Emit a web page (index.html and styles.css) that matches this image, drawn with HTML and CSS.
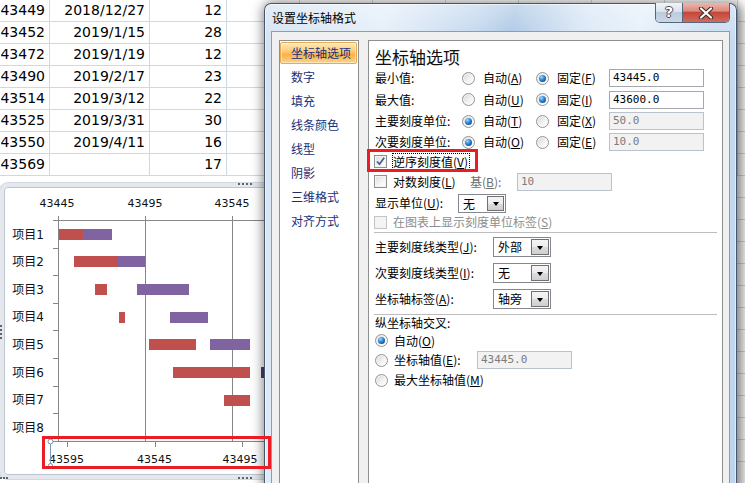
FILE: index.html
```html
<!DOCTYPE html>
<html lang="zh-CN">
<head>
<meta charset="utf-8">
<title>设置坐标轴格式</title>
<link rel="stylesheet" href="styles.css">
</head>
<body>
<div class="sheet">
  <div class="srow"><div class="cell ca">43449</div><div class="cell cb">2018/12/27</div><div class="cell cc">12</div><div class="cell cd"></div><div class="cell cd"></div><div class="cell cd"></div><div class="cell cd"></div><div class="cell cd"></div><div class="cell cd"></div><div class="cell cd"></div></div>
  <div class="srow"><div class="cell ca">43452</div><div class="cell cb">2019/1/15</div><div class="cell cc">28</div><div class="cell cd"></div><div class="cell cd"></div><div class="cell cd"></div><div class="cell cd"></div><div class="cell cd"></div><div class="cell cd"></div><div class="cell cd"></div></div>
  <div class="srow"><div class="cell ca">43472</div><div class="cell cb">2019/1/19</div><div class="cell cc">12</div><div class="cell cd"></div><div class="cell cd"></div><div class="cell cd"></div><div class="cell cd"></div><div class="cell cd"></div><div class="cell cd"></div><div class="cell cd"></div></div>
  <div class="srow"><div class="cell ca">43490</div><div class="cell cb">2019/2/17</div><div class="cell cc">23</div><div class="cell cd"></div><div class="cell cd"></div><div class="cell cd"></div><div class="cell cd"></div><div class="cell cd"></div><div class="cell cd"></div><div class="cell cd"></div></div>
  <div class="srow"><div class="cell ca">43514</div><div class="cell cb">2019/3/12</div><div class="cell cc">22</div><div class="cell cd"></div><div class="cell cd"></div><div class="cell cd"></div><div class="cell cd"></div><div class="cell cd"></div><div class="cell cd"></div><div class="cell cd"></div></div>
  <div class="srow"><div class="cell ca">43525</div><div class="cell cb">2019/3/31</div><div class="cell cc">30</div><div class="cell cd"></div><div class="cell cd"></div><div class="cell cd"></div><div class="cell cd"></div><div class="cell cd"></div><div class="cell cd"></div><div class="cell cd"></div></div>
  <div class="srow"><div class="cell ca">43550</div><div class="cell cb">2019/4/11</div><div class="cell cc">16</div><div class="cell cd"></div><div class="cell cd"></div><div class="cell cd"></div><div class="cell cd"></div><div class="cell cd"></div><div class="cell cd"></div><div class="cell cd"></div></div>
  <div class="srow"><div class="cell ca">43569</div><div class="cell cb"></div><div class="cell cc">17</div><div class="cell cd"></div><div class="cell cd"></div><div class="cell cd"></div><div class="cell cd"></div><div class="cell cd"></div><div class="cell cd"></div><div class="cell cd"></div></div>
  <div class="srow"></div><div class="srow"></div><div class="srow"></div><div class="srow"></div><div class="srow"></div><div class="srow"></div><div class="srow"></div><div class="srow"></div><div class="srow"></div><div class="srow"></div><div class="srow"></div><div class="srow"></div><div class="srow"></div><div class="srow"></div>
</div>

<div class="chart">
  <span class="hdl hdl-top"></span>
  <span class="hdl hdl-left"></span>
  <span class="hdl hdl-bottom"></span>
  <span class="hdl hdl-corner"></span>
  <svg class="plot" width="292" height="296" viewBox="0 0 292 296">
    <g class="axlbl" text-anchor="middle">
      <text x="57" y="23.5">43445</text>
      <text x="145" y="23.5">43495</text>
      <text x="232" y="23.5">43545</text>
    </g>
    <g stroke="#868686" stroke-width="1" fill="none">
      <path d="M53 37.5H292"/>
      <path d="M58.5 33V259M145.5 33V259M232.5 33V259"/>
      <path d="M53 65.5H58M53 92.5H58M53 120.5H58M53 147.5H58M53 175.5H58M53 203.5H58M53 230.5H58"/>
      <path d="M50 258.5H292M67.5 258.5V264M155.5 258.5V264M242.5 258.5V264"/>
    </g>
    <g class="catlbl" text-anchor="end">
      <text x="44" y="55.5">项目1</text>
      <text x="44" y="83">项目2</text>
      <text x="44" y="110.5">项目3</text>
      <text x="44" y="138">项目4</text>
      <text x="44" y="165.5">项目5</text>
      <text x="44" y="193.5">项目6</text>
      <text x="44" y="221">项目7</text>
      <text x="44" y="248.5">项目8</text>
    </g>
    <g fill="#c0504d">
      <rect x="59" y="46" width="24" height="11"/>
      <rect x="74" y="73" width="44" height="11"/>
      <rect x="95" y="101" width="12" height="11"/>
      <rect x="119" y="129" width="6" height="11"/>
      <rect x="149" y="156" width="47" height="11"/>
      <rect x="173" y="184" width="77" height="11"/>
      <rect x="224" y="212" width="26" height="11"/>
    </g>
    <g fill="#8064a2">
      <rect x="83" y="46" width="29" height="11"/>
      <rect x="118" y="73" width="27.5" height="11"/>
      <rect x="137" y="101" width="52" height="11"/>
      <rect x="170" y="129" width="38" height="11"/>
      <rect x="210" y="156" width="40" height="11"/>
      <rect x="261" y="184" width="4" height="11" fill="#4f3f6b"/>
    </g>
    <g class="axlbl" text-anchor="middle">
      <text x="66.5" y="280">43595</text>
      <text x="154.5" y="280">43545</text>
      <text x="240" y="280">43495</text>
    </g>
    <path d="M50.5 258.5V282.5" stroke="#7d97b8" stroke-width="1"/>
    <circle cx="50.5" cy="258.5" r="2.5" fill="#fff" stroke="#6f8db3"/>
    <circle cx="50.5" cy="282.5" r="2" fill="#fff" stroke="#6f8db3"/>
  </svg>
</div>

<div class="dialog">
  <div class="titlebar">设置坐标轴格式</div>
  <div class="caption">
    <div class="cap-help">?</div>
    <div class="cap-close">
      <svg width="16" height="12" viewBox="0 0 16 12">
        <path d="M3 1.5L13 10.5M13 1.5L3 10.5" stroke="#3d2b2b" stroke-width="4.2" stroke-linecap="round"/>
        <path d="M3 1.5L13 10.5M13 1.5L3 10.5" stroke="#fff" stroke-width="2.2" stroke-linecap="round"/>
      </svg>
    </div>
  </div>
  <div class="client">
    <div class="nav">
      <div class="nav-item sel">坐标轴选项</div>
      <div class="nav-item">数字</div>
      <div class="nav-item">填充</div>
      <div class="nav-item">线条颜色</div>
      <div class="nav-item">线型</div>
      <div class="nav-item">阴影</div>
      <div class="nav-item">三维格式</div>
      <div class="nav-item">对齐方式</div>
    </div>
    <div class="panel">
      <div class="ph">坐标轴选项</div>

      <div class="row h22">
        <span class="lbl">最小值:</span>
        <span class="opt o1"><i class="radio"></i>自动(<u>A</u>)</span>
        <span class="opt o2"><i class="radio on"></i>固定(<u>F</u>)</span>
        <span class="tb">43445.0</span>
      </div>
      <div class="row h21">
        <span class="lbl">最大值:</span>
        <span class="opt o1"><i class="radio"></i>自动(<u>U</u>)</span>
        <span class="opt o2"><i class="radio on"></i>固定(<u>I</u>)</span>
        <span class="tb">43600.0</span>
      </div>
      <div class="row h22">
        <span class="lbl">主要刻度单位:</span>
        <span class="opt o1"><i class="radio on"></i>自动(<u>T</u>)</span>
        <span class="opt o2"><i class="radio"></i>固定(<u>X</u>)</span>
        <span class="tb dis">50.0</span>
      </div>
      <div class="row h20">
        <span class="lbl">次要刻度单位:</span>
        <span class="opt o1"><i class="radio on"></i>自动(<u>O</u>)</span>
        <span class="opt o2"><i class="radio"></i>固定(<u>E</u>)</span>
        <span class="tb dis">10.0</span>
      </div>

      <div class="row h18 cbrow">
        <i class="chk on"><svg width="11" height="11" viewBox="0 0 11 11"><path d="M2 5.5L4.5 8.2L9.2 1.8" fill="none" stroke="#4a5c93" stroke-width="1.8"/></svg></i>
        <span class="focus">逆序刻度值(<u>V</u>)</span>
      </div>
      <div class="row h23 cbrow">
        <i class="chk"></i>
        <span class="logtxt">对数刻度(<u>L</u>)</span>
        <span class="base">基(<u>B</u>):</span>
        <span class="tb dis">10</span>
      </div>
      <div class="row h20">
        <span class="lbl lbl-unit">显示单位(<u>U</u>):</span>
        <span class="dd dd-s"><span class="dd-t">无</span><span class="dd-b"></span></span>
      </div>
      <div class="row h18 cbrow">
        <i class="chk dis"></i>
        <span class="distxt">在图表上显示刻度单位标签(<u>S</u>)</span>
      </div>

      <div class="sep sep1"></div>

      <div class="row h26">
        <span class="lbl lbl-tick">主要刻度线类型(<u>J</u>):</span>
        <span class="dd"><span class="dd-t">外部</span><span class="dd-b"></span></span>
      </div>
      <div class="row h26">
        <span class="lbl lbl-tick">次要刻度线类型(<u>I</u>):</span>
        <span class="dd"><span class="dd-t">无</span><span class="dd-b"></span></span>
      </div>
      <div class="row h26">
        <span class="lbl lbl-tick">坐标轴标签(<u>A</u>):</span>
        <span class="dd"><span class="dd-t">轴旁</span><span class="dd-b"></span></span>
      </div>

      <div class="sep sep2"></div>

      <div class="row h16">纵坐标轴交叉:</div>
      <div class="row h19 rrow"><i class="radio on"></i>自动(<u>O</u>)</div>
      <div class="row h20 rrow"><i class="radio"></i><span class="cross-lbl">坐标轴值(<u>E</u>):</span><span class="tb dis">43445.0</span></div>
      <div class="row h20 rrow"><i class="radio"></i>最大坐标轴值(<u>M</u>)</div>
    </div>
  </div>
</div>

<div class="mark mark-axis"></div>
<div class="mark mark-rev"></div>
</body>
</html>
```

FILE: styles.css
```css
* { box-sizing: border-box; }
html, body { margin: 0; padding: 0; }
body {
  width: 745px;
  height: 483px;
  overflow: hidden;
  position: relative;
  background: #fff;
  font-family: "DejaVu Sans", sans-serif;
}

/* ---------- spreadsheet ---------- */
.sheet { display: flex; flex-direction: column; }
.srow {
  display: flex;
  flex: none;
  height: 22px;
  border-bottom: 1px solid #d0d7e5;
}
.cell {
  flex: none;
  height: 21px;
  line-height: 21px;
  border-right: 1px solid #d0d7e5;
  font-size: 14px;
  text-align: right;
  padding-right: 4px;
  color: #000;
  white-space: nowrap;
}
.ca { width: 50px; }
.cb { width: 100px; }
.cc { width: 77px; }
.cd { width: 73px; }

/* ---------- chart object ---------- */
.chart {
  position: absolute;
  left: 0;
  top: 183px;
  width: 292px;
  height: 296px;
  background: #fff;
  border: 4px solid #e4e8ed;
  border-radius: 8px;
  box-shadow: inset 0 0 0 1px #bcc6d1, 0 0 0 1px #d2d9e1;
}
.plot { display: block; margin: -4px; }
.axlbl { font-family: "DejaVu Sans", sans-serif; font-size: 11px; fill: #111; }
.catlbl { font-family: "DejaVu Sans", "Noto Sans CJK SC", sans-serif; font-size: 12px; fill: #111; }
.hdl { position: absolute; display: block; }
.hdl-top { left: 234px; top: -4px; width: 14px; border-top: 2px dotted #5c6470; }
.hdl-bottom { left: 234px; bottom: -4px; width: 14px; border-top: 2px dotted #5c6470; }
.hdl-left { left: -4px; top: 138px; height: 14px; border-left: 2px dotted #5c6470; }
.hdl-corner { left: -4px; bottom: -4px; width: 8px; border-top: 2px dotted #5c6470; }

/* ---------- dialog window ---------- */
.dialog {
  position: absolute;
  left: 264px;
  top: 3px;
  width: 473px;
  height: 500px;
  display: flex;
  flex-direction: column;
  padding: 0 6px;
  border: 1px solid #46566b;
  border-bottom: none;
  border-radius: 7px 7px 0 0;
  background:
    linear-gradient(180deg, rgba(255,255,255,0.35), rgba(255,255,255,0) 40px),
    linear-gradient(100deg, #d3e2f2 0%, #e4eef9 22%, #c2d7ee 38%, #aac6e4 45%, #d9e7f6 58%, #e6f0fa 68%, #c9dcf1 80%, #bcd4ee 100%);
  box-shadow: inset 0 0 0 1px rgba(255,255,255,0.55), 2px 2px 12px 3px rgba(0,0,0,0.5);
  font-family: "Noto Sans CJK SC", "DejaVu Sans", sans-serif;
  font-size: 12px;
  color: #000;
}
.titlebar {
  flex: none;
  height: 27px;
  line-height: 27px;
  padding-left: 1px;
  font-size: 12px;
  color: #000;
}
.caption {
  position: absolute;
  top: -1px;
  right: 6px;
  display: flex;
  height: 20px;
  border: 1px solid #56667c;
  border-top: none;
  border-radius: 0 0 5px 5px;
  overflow: hidden;
}
.cap-help {
  width: 27px;
  border-right: 1px solid #56667c;
  background: linear-gradient(180deg, #f0f4fa 0%, #d9e3ef 45%, #bccbde 50%, #c8d6e8 100%);
  text-align: center;
  font-family: "DejaVu Sans", sans-serif;
  font-weight: bold;
  font-size: 14px;
  line-height: 19px;
  color: #fff;
  text-shadow: 1px 0 0 #444c58, -1px 0 0 #444c58, 0 1px 0 #444c58, 0 -1px 0 #444c58;
}
.cap-close {
  width: 46px;
  display: flex;
  align-items: center;
  justify-content: center;
  background: linear-gradient(180deg, #ecb7ac 0%, #dc8b7c 42%, #c5473a 50%, #d06a5c 100%);
}

.client {
  flex: 1;
  display: flex;
  gap: 9px;
  padding: 8px 6px 0 7px;
  background: #f0f0f0;
  border: 1px solid #8d9cb0;
  border-bottom: none;
}
.nav {
  flex: none;
  width: 80px;
  display: flex;
  flex-direction: column;
  gap: 2px;
  padding: 1px 1px 0 0;
  background: #fff;
  border: 1px solid #8e8f8f;
}
.nav-item {
  height: 22px;
  line-height: 20px;
  padding-left: 10px;
  border: 1px solid transparent;
  color: #17307a;
  white-space: nowrap;
}
.nav-item.sel {
  border-color: #e5aa55;
  border-radius: 2px;
  background: linear-gradient(180deg, #fee9b8 0%, #fdcc78 40%, #fbb246 58%, #fdd28a 100%);
  box-shadow: inset 0 0 0 1px rgba(255,255,255,0.45);
}

.panel {
  flex: none;
  width: 355px;
  padding: 5px 5px 0 6px;
  background: #fff;
  border: 1px solid #8e8f8f;
  display: flex;
  flex-direction: column;
}
.ph {
  height: 21px;
  line-height: 21px;
  font-size: 17px;
  color: #111;
}
.row {
  display: flex;
  align-items: center;
  flex: none;
  white-space: nowrap;
  line-height: 14px;
}
.h16 { height: 16px; }
.h18 { height: 18px; }
.h19 { height: 19px; }
.h20 { height: 20px; }
.h21 { height: 21px; }
.h22 { height: 22px; }
.h23 { height: 23px; }
.h26 { height: 26px; }

.lbl { flex: none; width: 87px; }
.lbl-unit { width: 83px; }
.lbl-tick { width: 118px; }
.opt { flex: none; display: flex; align-items: center; }
.o1 { width: 74px; }
.o2 { width: 73px; }
.opt .radio { margin-right: 8px; }

.radio {
  flex: none;
  position: relative;
  display: inline-block;
  width: 13px;
  height: 13px;
  border-radius: 50%;
  border: 1px solid #939393;
  background: linear-gradient(135deg, #d6d6d6 0%, #f4f4f4 60%, #ffffff 100%);
  box-shadow: inset 0 0 0 1px rgba(255,255,255,0.6);
}
.radio.on::after {
  content: "";
  position: absolute;
  left: 2px;
  top: 2px;
  width: 7px;
  height: 7px;
  border-radius: 50%;
  background: radial-gradient(circle at 35% 30%, #a7dcff 0%, #3a95e0 35%, #0d56a3 75%, #093f7d 100%);
}

.chk {
  flex: none;
  display: inline-flex;
  align-items: center;
  justify-content: center;
  width: 13px;
  height: 13px;
  margin-left: -1px;
  margin-right: 6px;
  border: 1px solid #8e8f8f;
  background: linear-gradient(135deg, #dcdcdc 0%, #f6f6f6 60%, #fff 100%);
  box-shadow: inset 0 0 0 1px #f4f4f4;
}
.chk.dis { border-color: #c4c4c4; background: #f4f4f4; box-shadow: none; }

.focus {
  outline: 1px dotted #000;
  outline-offset: 0;
  padding: 0 1px 0 0;
  line-height: 15px;
}
.logtxt { width: 77px; }
.base { width: 47px; color: #6d6d6d; }
.distxt { color: #8d8d8d; }

.tb {
  flex: none;
  display: inline-block;
  width: 95px;
  height: 18px;
  line-height: 16px;
  padding-left: 3px;
  border: 1px solid #a5a8ae;
  background: #fff;
  font-family: "DejaVu Sans Mono", monospace;
  font-size: 11px;
  color: #000;
}
.tb.dis {
  border-color: #b9c3ce;
  background: #f2f2f2;
  color: #7c7c7c;
}

.dd {
  flex: none;
  display: flex;
  width: 58px;
  height: 20px;
  border: 1px solid #828790;
  background: #fff;
}
.dd-s { width: 48px; height: 19px; }
.dd-t { flex: 1; padding-left: 4px; line-height: 18px; }
.dd-b {
  flex: none;
  width: 18px;
  margin: 1px;
  border: 1px solid #707070;
  background: linear-gradient(180deg, #f4f4f4 0%, #ececec 50%, #dcdcdc 51%, #cfcfcf 100%);
  display: flex;
  align-items: center;
  justify-content: center;
}
.dd-s .dd-b { width: 17px; }
.dd-b::after {
  content: "";
  border-top: 4px solid #000;
  border-left: 3.5px solid transparent;
  border-right: 3.5px solid transparent;
  margin-top: 1px;
}

.sep { flex: none; height: 1px; background: #bdbdbd; margin-left: -1px; }
.sep1 { margin-top: 1px; margin-bottom: 1px; }
.sep2 { margin-top: 2px; margin-bottom: 0; }

.rrow .radio { margin-right: 6px; }
.cross-lbl { width: 83px; }

/* ---------- annotation marks ---------- */
.mark {
  position: absolute;
  border: 3px solid #ec1c24;
  z-index: 5;
}
.mark-axis { left: 42px; top: 436px; width: 229px; height: 33px; }
.mark-rev { left: 367px; top: 149px; width: 111px; height: 23px; }
```
